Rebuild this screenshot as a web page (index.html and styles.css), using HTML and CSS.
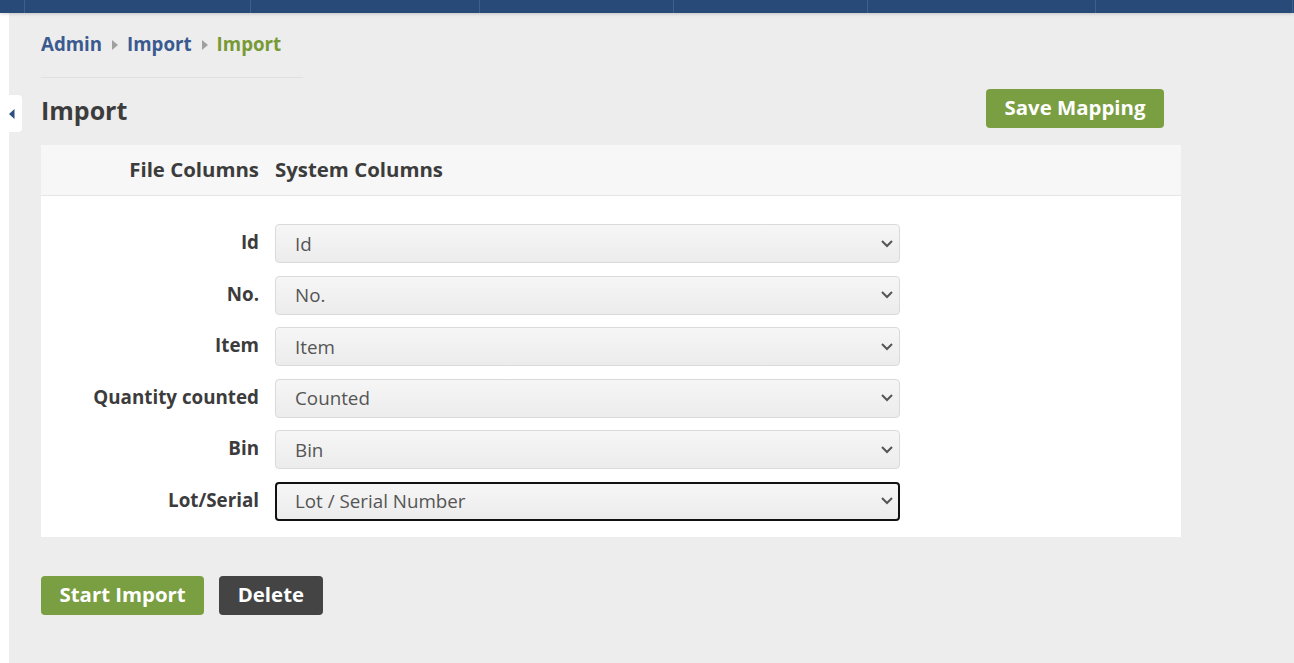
FILE: index.html
```html
<!DOCTYPE html>
<html lang="en">
<head>
<meta charset="utf-8">
<title>Import</title>
<link rel="stylesheet" href="styles.css">
</head>
<body>
<div class="topbar">
  <div class="seg s1"></div><div class="seg s2"></div><div class="seg s3"></div><div class="seg s4"></div><div class="seg s5"></div><div class="seg s6"></div><div class="seg s7"></div><div class="seg s8"></div>
</div>
<div class="layout">
  <aside class="sidebar"></aside>
  <main class="content">
    <div class="sidetab">
      <svg width="6" height="10" viewBox="0 0 6 10"><path d="M5.5 0 L0 5 L5.5 10 Z" fill="#2e4f80"/></svg>
    </div>
    <nav class="breadcrumb">
      <a class="crumb">Admin</a>
      <svg class="sep" width="6" height="10" viewBox="0 0 6 10"><path d="M0 0 L6 5 L0 10 Z" fill="#a0a0a0"/></svg>
      <a class="crumb">Import</a>
      <svg class="sep" width="6" height="10" viewBox="0 0 6 10"><path d="M0 0 L6 5 L0 10 Z" fill="#a0a0a0"/></svg>
      <span class="crumb current">Import</span>
    </nav>
    <div class="rule"></div>
    <div class="title-row">
      <h1 class="title">Import</h1>
      <button class="btn btn-green">Save Mapping</button>
    </div>
    <section class="card">
      <div class="card-head">
        <div class="head-label">File Columns</div>
        <div class="head-sys">System Columns</div>
      </div>
      <div class="card-body">
        <div class="map-label">Id</div>
        <div class="select"><span>Id</span><svg class="chev" width="12" height="8" viewBox="0 0 12 8"><path d="M1 1 L6 6 L11 1" fill="none" stroke="#555" stroke-width="2"/></svg></div>
        <div class="map-label">No.</div>
        <div class="select"><span>No.</span><svg class="chev" width="12" height="8" viewBox="0 0 12 8"><path d="M1 1 L6 6 L11 1" fill="none" stroke="#555" stroke-width="2"/></svg></div>
        <div class="map-label">Item</div>
        <div class="select"><span>Item</span><svg class="chev" width="12" height="8" viewBox="0 0 12 8"><path d="M1 1 L6 6 L11 1" fill="none" stroke="#555" stroke-width="2"/></svg></div>
        <div class="map-label">Quantity counted</div>
        <div class="select"><span>Counted</span><svg class="chev" width="12" height="8" viewBox="0 0 12 8"><path d="M1 1 L6 6 L11 1" fill="none" stroke="#555" stroke-width="2"/></svg></div>
        <div class="map-label">Bin</div>
        <div class="select"><span>Bin</span><svg class="chev" width="12" height="8" viewBox="0 0 12 8"><path d="M1 1 L6 6 L11 1" fill="none" stroke="#555" stroke-width="2"/></svg></div>
        <div class="map-label">Lot/Serial</div>
        <div class="select focused"><span>Lot / Serial Number</span><svg class="chev" width="12" height="8" viewBox="0 0 12 8"><path d="M1 1 L6 6 L11 1" fill="none" stroke="#555" stroke-width="2"/></svg></div>
      </div>
    </section>
    <div class="actions">
      <button class="btn btn-green">Start Import</button>
      <button class="btn btn-dark">Delete</button>
    </div>
  </main>
</div>
</body>
</html>
```

FILE: styles.css
```css
* { box-sizing: border-box; }
html, body { margin: 0; padding: 0; }
body {
  background: #ffffff;
  font-family: "Open Sans", "Liberation Sans", sans-serif;
  color: #3f3f3f;
  width: 1294px;
  height: 663px;
  overflow: hidden;
}
.topbar {
  display: flex;
  height: 13px;
  background: #284a78;
  position: relative;
  z-index: 2;
  box-shadow: 0 1px 3px rgba(0,0,0,0.18);
}
.seg { height: 100%; border-right: 1px solid #3f5f8c; }
.s1 { width: 25px; }
.s2 { width: 226px; }
.s3 { width: 229px; }
.s4 { width: 194px; }
.s5 { width: 194px; }
.s6 { width: 228px; }
.s7 { width: 197px; }
.s8 { flex: 1; border-right: none; }
.layout { display: flex; height: 650px; }
.sidebar { width: 9px; background: #ffffff; }
.content {
  flex: 1;
  background: #ededed;
  padding-left: 32px;
  position: relative;
}
.sidetab {
  position: absolute;
  left: -1px;
  top: 82px;
  width: 14px;
  height: 37px;
  background: #ffffff;
  border-radius: 0 4px 4px 0;
  display: flex;
  align-items: center;
  padding-left: 1px;
}
.breadcrumb {
  display: flex;
  align-items: center;
  height: 24px;
  margin-top: 18px;
  margin-bottom: 1px;
  font-size: 18.7px;
  font-weight: 700;
}
.crumb { color: #3a5a8f; text-decoration: none; }
.crumb.current { color: #789a36; }
.sep { margin: 3px 9px 0 10px; }
.rule {
  width: 262px;
  height: 1px;
  background: #e0e0e0;
  margin-top: 22px;
}
.title-row {
  width: 1140px;
  display: flex;
  justify-content: space-between;
  align-items: center;
  padding-right: 17px;
  margin-top: 11px;
  height: 39px;
}
.title {
  margin: 0;
  font-size: 25px;
  font-weight: 700;
  color: #3c3c3c;
  position: relative;
  top: 1px;
}
.btn {
  font-family: "Open Sans", "Liberation Sans", sans-serif;
  font-size: 20.4px;
  font-weight: 700;
  color: #ffffff;
  border: none;
  border-radius: 4px;
  height: 39px;
  padding: 0 18.5px 3px;
  cursor: pointer;
}
.btn-green { background: #7a9e42; }
.btn-dark { background: #444444; }
.card {
  width: 1140px;
  margin-top: 17px;
  background: #ffffff;
}
.card-head {
  height: 51px;
  background: #f7f7f7;
  border-bottom: 1px solid #e6e6e6;
  display: grid;
  grid-template-columns: 218px 1fr;
  column-gap: 16px;
  align-items: center;
  padding-bottom: 2px;
  font-size: 20.4px;
  font-weight: 700;
  color: #3c3c3c;
}
.head-label { text-align: right; }
.card-body {
  display: grid;
  grid-template-columns: 218px 625px;
  column-gap: 16px;
  row-gap: 12.5px;
  align-items: center;
  padding: 28px 0 16px 0;
}
.map-label {
  text-align: right;
  font-size: 18.8px;
  font-weight: 700;
  color: #3c3c3c;
  padding-bottom: 3px;
}
.select {
  height: 39px;
  border: 1px solid #dadada;
  border-radius: 4px;
  background: linear-gradient(#f6f6f6, #ececec);
  display: flex;
  align-items: center;
  justify-content: space-between;
  padding: 0 6px 0 19px;
  font-size: 18.8px;
  color: #555555;
}
.select.focused {
  border: 2px solid #111111;
  padding-left: 18px;
  padding-right: 5px;
}
.chev { margin-top: 0; }
.actions {
  display: flex;
  gap: 15px;
  margin-top: 39px;
}
```
